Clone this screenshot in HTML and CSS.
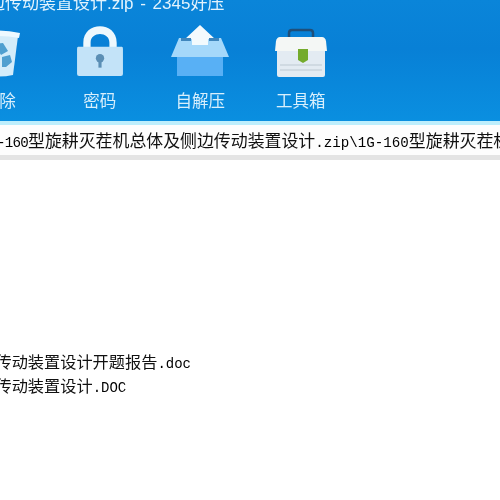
FILE: index.html
```html
<!DOCTYPE html>
<html lang="zh-CN">
<head>
    <meta charset="UTF-8">
    <title>2345好压</title>
    <link rel="stylesheet" href="styles.css">
</head>
<body>

    <header class="toolbar">
        <div class="title">边传动装置设计.zip - 2345好压</div>
        <div class="tools">
            <div class="tool">
                <svg class="icon" width="44" height="52" viewBox="0 -4 44 52">
                    <path d="M3 7 L41 7 L36 46 Q22 49 8 46 Z" fill="#d3ecfa"/>
                    <path d="M1 4 Q22 -1 43 4 L42 9 Q22 5 2 9 Z" fill="#eef9ff"/>
                    <path d="M17 15 L26 14 L31 22 L24 26 L21 21 Z M25 28 L33 26 L35 33 L29 38 L25 38 Z M12 24 L19 28 L23 38 L14 38 L10 31 Z" fill="#4f9fd0"/>
                </svg>
                <span class="tool-label">删除</span>
            </div>
            <div class="tool">
                <svg class="icon" width="48" height="52" viewBox="1 -1 46 50" preserveAspectRatio="none">
                    <path d="M8 22 V16 C8 -5 40 -5 40 16 V22 H33 V16 C33 5 15 5 15 16 V22 Z" fill="#eef8fd"/>
                    <path d="M3 20 H45 Q46 20 46 22 V46 Q46 48 44 48 H4 Q2 48 2 46 V22 Q2 20 3 20 Z" fill="#c3e3f8"/>
                    <circle cx="24" cy="31" r="4" fill="#5b8fb5"/>
                    <rect x="22.5" y="32" width="3" height="8" fill="#5b8fb5"/>
                </svg>
                <span class="tool-label">密码</span>
            </div>
            <div class="tool">
                <svg class="icon" width="58" height="52" viewBox="0 0 58 52">
                    <path d="M6 24 H52 V51 H6 Z" fill="#58b0f5"/>
                    <path d="M0 32 L8 13 H50 L58 32 Z" fill="#a5d8fa"/>
                    <path d="M14 14 L29 0 L44 14 H37 V20 H21 V14 Z" fill="#f3fafd"/>
                    <path d="M10 13 H20 V16 H10 Z M38 13 H48 V16 H38 Z" fill="#3f86bd"/>
                </svg>
                <span class="tool-label">自解压</span>
            </div>
            <div class="tool">
                <svg class="icon" width="52" height="52" viewBox="0 -4 52 52">
                    <path d="M14 10 V4 Q14 1 17 1 H35 Q38 1 38 4 V10" fill="none" stroke="#1f4f7a" stroke-width="2.5"/>
                    <path d="M5 8 H47 Q50 8 51 12 L52 22 H0 L1 12 Q2 8 5 8 Z" fill="#f4f7f5"/>
                    <path d="M2 22 H50 V46 Q50 48 48 48 H4 Q2 48 2 46 Z" fill="#e3ebf2"/>
                    <path d="M5 36 H47 M5 41 H47" stroke="#bdc9d2" stroke-width="1"/>
                    <path d="M23 20 H33 V31 L28 34 L23 31 Z" fill="#74ab2c"/>
                </svg>
                <span class="tool-label">工具箱</span>
            </div>
        </div>
    </header>

    <div class="path-bar">
        <div class="path-text"><span class="latin lead">-160</span>型旋耕灭茬机总体及侧边传动装置设计<span class="latin">.zip\1G-160</span>型旋耕灭茬机总体及侧边传动装置设计</div>
    </div>

    <section class="file-list">
        <div class="file-row">传动装置设计开题报告<span class="latin">.doc</span></div>
        <div class="file-row">传动装置设计<span class="latin">.DOC</span></div>
    </section>

</body>
</html>
```

FILE: styles.css
```css
html, body {
    margin: 0;
    padding: 0;
}
body {
    width: 500px;
    height: 500px;
    overflow: hidden;
    background-color: white;
    font-family: "Noto Sans CJK SC", sans-serif;
}
.toolbar {
    height: 121px;
    overflow: hidden;
    background: linear-gradient(#0a85d9, #0880d6 40%, #0a8fe0);
    color: #d8effc;
}
.title {
    height: 24px;
    margin-top: -8px;
    margin-left: -12px;
    font-family: "Liberation Sans", "Noto Sans CJK SC", sans-serif;
    font-size: 17px;
    line-height: 24px;
    word-spacing: 2px;
    white-space: nowrap;
    color: #e2f3fd;
    filter: blur(0.4px);
}
.tools {
    display: flex;
    margin-left: -51px;
}
.tool {
    display: flex;
    flex-direction: column;
    align-items: center;
    flex: none;
    width: 100.5px;
}
.icon {
    height: 52px;
    margin-top: 9px;
    filter: blur(0.5px);
}
.tool-label {
    margin-top: 13px;
    font-size: 16.5px;
    line-height: 20px;
    white-space: nowrap;
    filter: blur(0.4px);
}
.path-bar {
    height: 30px;
    border-top: 4px solid #bdeefc;
    border-bottom: 5px solid #e4e4e4;
    background-color: #fdfdfd;
    overflow: hidden;
}
.path-text {
    margin-left: -3px;
    font-size: 16.9px;
    line-height: 30px;
    white-space: nowrap;
    color: #111;
    filter: blur(0.4px);
}
.latin {
    font-family: "Liberation Mono", monospace;
    font-size: 14.2px;
    color: #000;
}
.lead {
    letter-spacing: -0.75px;
}
.file-list {
    margin-top: 189px;
    margin-left: -4.5px;
}
.file-row {
    height: 24px;
    font-size: 16.2px;
    line-height: 24px;
    white-space: nowrap;
    color: #111;
    filter: blur(0.4px);
}
.file-row .latin {
    font-size: 14px;
}
```
